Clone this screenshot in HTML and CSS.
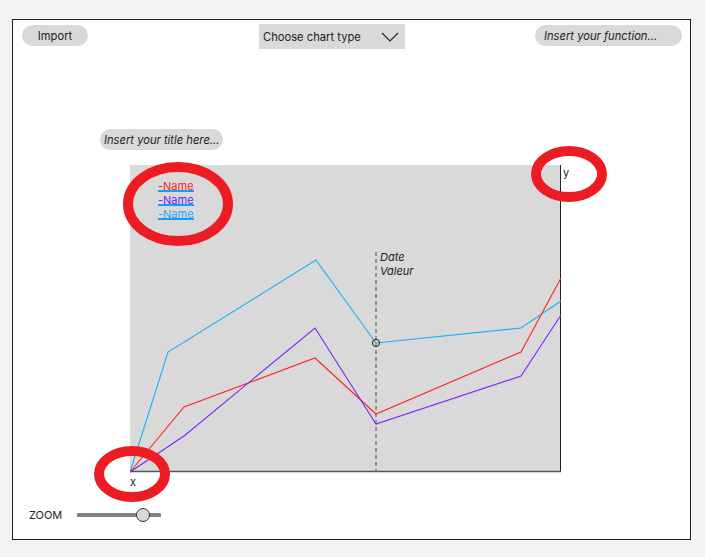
FILE: index.html
```html
<!DOCTYPE html>
<html>
<head>
<meta charset="utf-8">
<link rel="stylesheet" href="styles.css">
</head>
<body>
<div class="frame">
  <div class="header">
    <div class="pill import">Import</div>
    <div class="select">
      <span>Choose chart type</span>
      <svg class="chev" width="18" height="10" viewBox="0 0 18 10"><path d="M1 1 L9 9 L17 1" fill="none" stroke="#222" stroke-width="1.1"/></svg>
    </div>
    <div class="pill func">Insert your function...</div>
  </div>
  <div class="pill title">Insert your title here...</div>
  <svg class="chart" width="445" height="325" viewBox="130 165 445 325">
    <rect x="130" y="165" width="430" height="307" fill="#d9d9d9"/>
    <line x1="560.5" y1="165" x2="560.5" y2="472" stroke="#222" stroke-width="1"/>
    <line x1="130" y1="471.5" x2="561" y2="471.5" stroke="#555" stroke-width="1.6"/>
    <line x1="376" y1="252" x2="376" y2="472" stroke="#666" stroke-width="1.2" stroke-dasharray="4 3"/>
    <polyline points="130,472 168,352 316,260 376,343 521,328 561,301" fill="none" stroke="#1ab0f7" stroke-width="1.1"/>
    <polyline points="130,472 184,407 315,358 376,414 521,352 561,278" fill="none" stroke="#ff2424" stroke-width="1.1"/>
    <polyline points="130,472 184,436 315,328 376,424 521,376 561,315" fill="none" stroke="#7a26ff" stroke-width="1.1"/>
    <circle cx="376" cy="343" r="3.6" fill="none" stroke="#222" stroke-width="1"/>
    <text class="lbl it" x="380" y="261">Date</text>
    <text class="lbl it" x="380" y="275">Valeur</text>
    <text class="lbl" x="563" y="177">y</text>
    <text class="lbl" x="130" y="486">x</text>
    <g class="legend">
      <line x1="158" y1="191" x2="194" y2="191" stroke="#1a9cf5" stroke-width="2"/>
      <text x="158" y="190" fill="#ff2424">-Name</text>
      <line x1="158" y1="205" x2="194" y2="205" stroke="#1a9cf5" stroke-width="2"/>
      <text x="158" y="204" fill="#6a1cff">-Name</text>
      <line x1="158" y1="219" x2="194" y2="219" stroke="#1a9cf5" stroke-width="2"/>
      <text x="158" y="218" fill="#1aa8f5">-Name</text>
    </g>
  </svg>
  <div class="zoom">
    <span class="zlabel">ZOOM</span>
    <div class="track"><div class="thumb"></div></div>
  </div>
  <svg class="marks" width="677" height="519" viewBox="13 20 677 519">
    <ellipse cx="178" cy="204" rx="50" ry="37" fill="none" stroke="#ed1c24" stroke-width="10"/>
    <ellipse cx="569" cy="174" rx="33" ry="23" fill="none" stroke="#ed1c24" stroke-width="10"/>
    <ellipse cx="132" cy="474" rx="33" ry="23" fill="none" stroke="#ed1c24" stroke-width="10"/>
  </svg>
</div>
</body>
</html>
```

FILE: styles.css
```css
html, body {
  margin: 0;
  padding: 0;
}
body {
  background: #f3f3f3;
  padding: 19px 0 0 12px;
  font-family: Inter, "Liberation Sans", sans-serif;
  color: #222;
}
.frame {
  position: relative;
  box-sizing: border-box;
  width: 679px;
  height: 521px;
  border: 1px solid #1e1e1e;
  background: #fff;
}
.header {
  display: flex;
  align-items: flex-start;
  padding: 4px 0 0 9px;
  height: 25px;
}
.pill {
  background: #d9d9d9;
  border-radius: 11px;
  height: 21px;
  box-sizing: border-box;
  font-size: 11.2px;
  line-height: 22px;
  white-space: nowrap;
}
.import {
  width: 66px;
  margin-top: 1px;
  text-align: center;
}
.select {
  margin-left: 171px;
  width: 146px;
  height: 25px;
  background: #d9d9d9;
  display: flex;
  align-items: center;
  justify-content: space-between;
  padding: 1px 6px 0 4px;
  box-sizing: border-box;
  font-size: 11.2px;
}
.chev {
  margin-top: 0;
}
.func {
  margin-left: 130px;
  width: 147px;
  margin-top: 1px;
  padding-left: 9px;
  font-style: italic;
}
.title {
  display: inline-block;
  margin: 80px 0 0 87px;
  width: 123px;
  padding-left: 4px;
  font-style: italic;
  vertical-align: top;
}
.chart {
  display: block;
  margin: 15px 0 0 117px;
}
.lbl {
  font-family: Inter, "Liberation Sans", sans-serif;
  font-size: 11px;
  fill: #222;
}
.it {
  font-style: italic;
}
.legend text {
  font-family: Inter, "Liberation Sans", sans-serif;
  font-size: 11px;
}
.zoom {
  display: flex;
  align-items: center;
  margin-top: 15px;
  padding-left: 16px;
  height: 20px;
}
.zlabel {
  font-size: 11px;
  width: 48px;
}
.track {
  position: relative;
  width: 84px;
  height: 4px;
  background: #808080;
  border-radius: 1px;
}
.thumb {
  position: absolute;
  left: 59px;
  top: -5px;
  width: 12px;
  height: 12px;
  border-radius: 50%;
  background: #d9d9d9;
  border: 1px solid #333;
}
.marks {
  position: absolute;
  left: 0;
  top: 0;
  pointer-events: none;
  overflow: visible;
}
```
